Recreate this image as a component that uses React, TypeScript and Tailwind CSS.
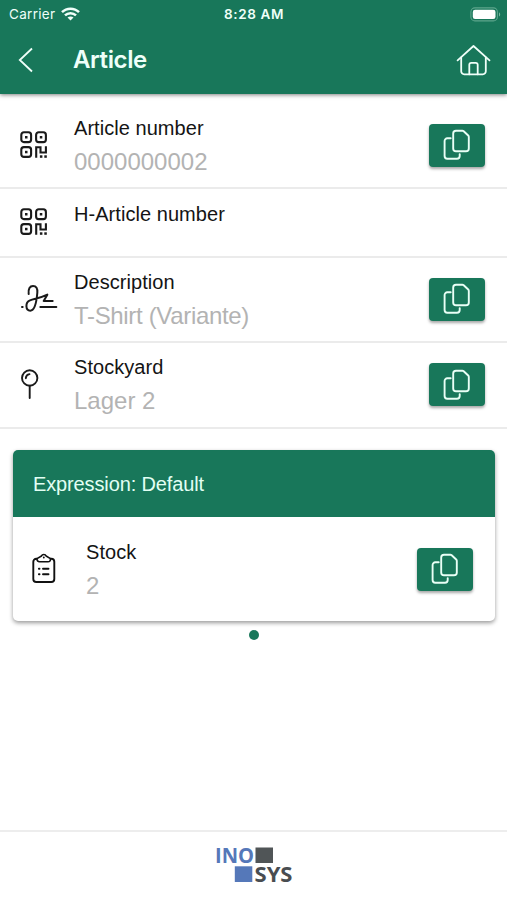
import type { ReactNode } from "react";

function QrIcon() {
  return (
    <svg width="28" height="28" viewBox="0 0 28 28" fill="none" stroke="#1a1a1a" strokeWidth="2.1">
      <rect x="1.3" y="1.3" width="9.8" height="9.8" rx="2.6" />
      <rect x="16.1" y="1.3" width="9.8" height="9.8" rx="2.6" />
      <rect x="1.3" y="16.1" width="9.8" height="9.8" rx="2.6" />
      <path d="M16.2 26.8V16.2h4.3v5.3h5.4v-6.3" />
      <g fill="#1a1a1a" stroke="none">
        <rect x="5" y="5" width="2.5" height="2.5" />
        <rect x="19.8" y="5" width="2.5" height="2.5" />
        <rect x="5" y="19.8" width="2.5" height="2.5" />
        <rect x="19.9" y="24.3" width="2.5" height="2.5" />
        <rect x="24.3" y="24.3" width="2.5" height="2.5" />
      </g>
    </svg>
  );
}

function SignatureIcon() {
  return (
    <svg width="38" height="28" viewBox="6 9 114 84" fill="none" stroke="#1a1a1a" strokeWidth="6" strokeLinecap="round" strokeLinejoin="round">
      <path d="M32 36C30 20 36 12 45 12c10 0 14 8 13 20-2 24-6 54-21 54-15 0-16-25-1-31 12-5 30-6 52-17L77 57h27" />
      <path d="M12 75h2M67 75h48" />
    </svg>
  );
}

function PinIcon() {
  return (
    <svg width="20" height="32" viewBox="0 0 20 32" fill="none" stroke="#1a1a1a" strokeWidth="1.9" strokeLinecap="round">
      <circle cx="9.7" cy="9" r="7.7" />
      <path d="M9.7 16.7v12.4M5.8 9.2C6 6.8 7.3 5.4 9.5 5.1" />
    </svg>
  );
}

function ClipboardIcon() {
  return (
    <svg width="24" height="32" viewBox="0 0 24 32" fill="none" stroke="#111" strokeWidth="1.9" strokeLinecap="round" strokeLinejoin="round">
      <path d="M5 5.7H4.3a3 3 0 0 0-3 3V26a3 3 0 0 0 3 3h15a3 3 0 0 0 3-3V8.700a3 3 0 0 0-3-3h-.8" />
      <path d="M5 5.6 9.5 3c.7-2 3.9-2 4.6 0l4.4 2.6c.2 2-.8 3.1-2.5 3.1H7.6C5.900 8.700 4.800 7.600 5 5.600Z" strokeWidth="1.6" />
      <path d="M11.8 4.5v.1M6.900 15.700h.6M6.900 21.200h.6M11 15.700h5.500M11 21.200h5.500" />
    </svg>
  );
}

function CopyIcon() {
  return (
    <svg width="28" height="32" viewBox="0 0 28 32" fill="none" stroke="#e9fff6" strokeWidth="1.9" strokeLinecap="round" strokeLinejoin="round">
      <path d="M13 1.7h6.3a2 2 0 0 1 1.400.5l4.500 4.300a2 2 0 0 1 .6 1.500v11.500a2.800 2.800 0 0 1-2.800 2.800H13a2.800 2.800 0 0 1-2.800-2.800v-15A2.800 2.800 0 0 1 13 1.700Z" />
      <path d="M7.7 9.3H4.3A2.700 2.700 0 0 0 1.600 12v15.100a2.700 2.700 0 0 0 2.700 2.700H14a2.700 2.700 0 0 0 2.700-2.700v-2" />
    </svg>
  );
}

function CopyButton() {
  return (
    <button className="flex h-[43px] w-14 shrink-0 items-center justify-center rounded bg-[#18775a] shadow-[0_2px_3px_rgba(0,0,0,0.35)]">
      <CopyIcon />
    </button>
  );
}

type FieldProps = { label: string; value?: string; icon: ReactNode };

function Field({ label, value, icon }: FieldProps) {
  return (
    <>
      <div className="flex w-[54px] shrink-0 items-center">{icon}</div>
      <div className="flex flex-1 flex-col">
        <span className="text-[20px] leading-[28px] tracking-[0.05px] text-[#141414]">{label}</span>
        {value && (
          <span
            className={
              value.length > 10
                ? "mt-[5px] text-[24px] leading-[30px] tracking-[-0.33px] text-[#b3b3b3]"
                : "mt-[5px] text-[24px] leading-[30px] text-[#b3b3b3]"
            }
          >
            {value}
          </span>
        )}
      </div>
      {value && <CopyButton />}
    </>
  );
}

const fields: FieldProps[] = [
  { label: "Article number", value: "0000000002", icon: <QrIcon /> },
  { label: "H-Article number", icon: <QrIcon /> },
  { label: "Description", value: "T-Shirt (Variante)", icon: <SignatureIcon /> },
  { label: "Stockyard", value: "Lager 2", icon: <PinIcon /> },
];

function Header() {
  return (
    <header className="h-[94px] bg-[#18775a] text-[#effff9] shadow-[0_1px_4px_rgba(0,0,0,0.5)]">
      <div className="grid h-7 grid-cols-3 items-center pl-[9px] pr-[6px] font-[Inter,sans-serif] text-[13.5px]">
        <div className="flex items-center gap-[6px]">
          <span className="tracking-[0.3px]">Carrier</span>
          <svg width="19" height="14" viewBox="0 0 19 14" fill="none" stroke="#effff9" strokeWidth="2.5">
            <path d="M1 5.2c4.700-4.700 12.300-4.700 17 0M4 8.400c3-3 8-3 11 0" />
            <path d="M6.500 10.600c1.700-1.600 4.300-1.600 6 0l-3 3Z" fill="#effff9" stroke="none" />
          </svg>
        </div>
        <span className="-ml-[2px] text-center font-semibold tracking-[0.6px]">8:28 AM</span>
        <svg className="ml-auto" width="31" height="15" viewBox="0 0 31 15">
          <rect x="0.9" y="0.9" width="26.5" height="13" rx="4" fill="none" stroke="#5da58c" strokeWidth="1.1" />
          <rect x="2.8" y="2.8" width="22.7" height="9.2" rx="2.3" fill="#fff" />
          <path d="M29 5.2c1.600.8 1.600 3.600 0 4.400Z" fill="#78b5a0" />
        </svg>
      </div>
      <div className="flex h-[64px] items-center pl-[18px] pr-4">
        <svg width="16" height="26" viewBox="0 0 16 26" fill="none" stroke="#effff9" strokeWidth="1.8">
          <path d="M14 1.5 1.800 13 14 24.500" />
        </svg>
        <h1 className="ml-[39px] flex-1 font-[Inter,sans-serif] text-[24px] font-semibold tracking-[-0.4px]">Article</h1>
        <svg width="35" height="32" viewBox="0 0 35 32" fill="none" stroke="#effff9" strokeWidth="1.8" strokeLinecap="round" strokeLinejoin="round">
          <path d="M1.6 16.3 17.500 2l16 14.300" />
          <path d="M5.2 13.5v13.800a3 3 0 0 0 3 3h18.600a3 3 0 0 0 3-3V13.500" />
          <path d="M13.3 30.3V20.800a2 2 0 0 1 2-2h4.400a2 2 0 0 1 2 2v9.500" />
        </svg>
      </div>
    </header>
  );
}

function Logo() {
  return (
    <svg className="overflow-visible" width="80" height="44" viewBox="0 0 80 44" fontFamily="Open Sans, sans-serif" fontSize="22" fontWeight="700">
      <text x="1" y="18" fill="#5578b9" textLength="39" lengthAdjust="spacingAndGlyphs">INO</text>
      <rect x="41.5" y="2.5" width="17.5" height="15.5" fill="#505557" />
      <rect x="20.8" y="21.3" width="17.5" height="15.7" fill="#5578b9" />
      <text x="40.5" y="37" fill="#494d51" textLength="38" lengthAdjust="spacingAndGlyphs">SYS</text>
    </svg>
  );
}

export default function App() {
  return (
    <div className="flex h-[900px] w-[507px] flex-col bg-white font-['Liberation_Sans',Arial,sans-serif]">
      <Header />

      <main className="flex flex-1 flex-col pt-[9.5px]">
        {fields.map((field) => (
          <div
            key={field.label}
            className={
              field.value
                ? "flex h-[85.5px] items-center border-b-2 border-[#ebebeb] pl-5 pr-[22px]"
                : "flex h-[68.5px] items-center border-b-2 border-[#ebebeb] pl-5 pr-[22px] [&>div:nth-child(2)]:pb-[17px]"
            }
          >
            <Field {...field} />
          </div>
        ))}

        <section className="ml-[13px] mr-3 mt-[21.5px] overflow-hidden rounded-[5px] shadow-[0_2px_4px_rgba(0,0,0,0.4)]">
          <h2 className="flex h-[67px] items-center bg-[#18775a] pl-5 text-[20px] tracking-[-0.13px] text-[#e2fff4]">Expression: Default</h2>
          <div className="flex h-[104px] items-center pl-[19px] pr-[22px]">
            <Field label="Stock" value="2" icon={<ClipboardIcon />} />
          </div>
        </section>

        <div className="mt-[9px] flex justify-center">
          <span className="size-[10px] rounded-full bg-[#18775a]" />
        </div>
      </main>

      <footer className="flex h-[70px] justify-center border-t-2 border-[#ededed] pt-[13px]">
        <Logo />
      </footer>
    </div>
  );
}
